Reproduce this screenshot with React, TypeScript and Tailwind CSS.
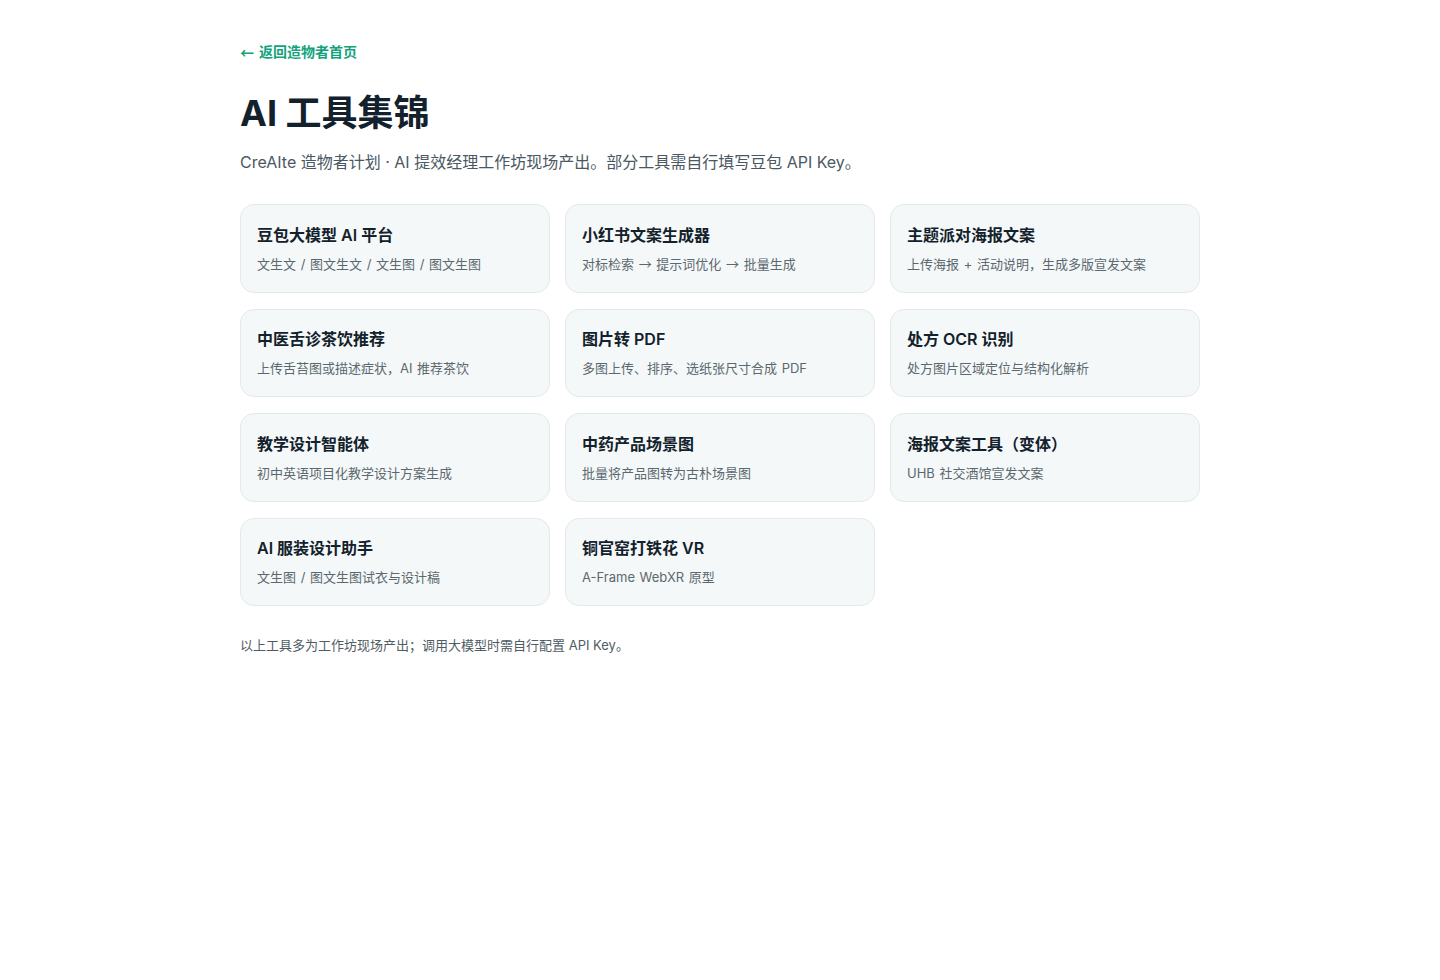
import type { ReactElement } from "react";

type Tool = {
  title: string;
  desc: string;
};

const tools: Tool[] = [
  { title: "豆包大模型 AI 平台", desc: "文生文 / 图文生文 / 文生图 / 图文生图" },
  { title: "小红书文案生成器", desc: "对标检索 → 提示词优化 → 批量生成" },
  { title: "主题派对海报文案", desc: "上传海报 + 活动说明，生成多版宣发文案" },
  { title: "中医舌诊茶饮推荐", desc: "上传舌苔图或描述症状，AI 推荐茶饮" },
  { title: "图片转 PDF", desc: "多图上传、排序、选纸张尺寸合成 PDF" },
  { title: "处方 OCR 识别", desc: "处方图片区域定位与结构化解析" },
  { title: "教学设计智能体", desc: "初中英语项目化教学设计方案生成" },
  { title: "中药产品场景图", desc: "批量将产品图转为古朴场景图" },
  { title: "海报文案工具（变体）", desc: "UHB 社交酒馆宣发文案" },
  { title: "AI 服装设计助手", desc: "文生图 / 图文生图试衣与设计稿" },
  { title: "铜官窑打铁花 VR", desc: "A-Frame WebXR 原型" },
];

const cjk = { fontFamily: '"Noto Sans CJK SC", sans-serif' };

// arrows taken from the CJK font are longer, like the reference
function Desc({ text }: { text: string }): ReactElement {
  const parts = text.split("→");
  return (
    <>
      {parts.map((part, i) => (
        <span key={i}>
          {i > 0 && <span style={cjk}>→</span>}
          {part}
        </span>
      ))}
    </>
  );
}

export default function App(): ReactElement {
  return (
    <div
      className="min-h-screen bg-white"
      style={{ fontFamily: '"Inter", "Noto Sans CJK SC", sans-serif' }}
    >
      <div className="mx-auto w-[960px] pt-[40px]">
        <a href="#" className="inline-flex items-center gap-[5px] text-sm font-semibold leading-5 text-[#12a37c]">
          <span style={cjk}>←</span>
          <span>返回造物者首页</span>
        </a>

        <h1 className="mt-[29px] text-[36px] font-bold leading-10 text-[#12212b]">
          AI 工具集锦
        </h1>
        <p className="mt-[17px] text-base leading-6 text-[#4a5862]">
          CreAIte 造物者计划 · AI 提效经理工作坊现场产出。部分工具需自行填写豆包 API Key。
        </p>

        <div className="mt-[30px] grid grid-cols-3 gap-x-[15px] gap-y-4">
          {tools.map((tool) => (
            <a
              key={tool.title}
              href="#"
              className="flex h-[88.5px] flex-col justify-center rounded-[14px] border border-[#e2eaea] bg-[#f5f8f8] px-4"
            >
              <h2 className="text-base font-semibold leading-6 text-[#12212b]">{tool.title}</h2>
              <p className="mt-[7px] text-[13px] leading-5 text-[#5b6870] [word-spacing:1px]">
                <Desc text={tool.desc} />
              </p>
            </a>
          ))}
        </div>

        <p className="mt-[29px] text-[13px] leading-5 text-[#4f5c64]">
          以上工具多为工作坊现场产出；调用大模型时需自行配置 API Key。
        </p>
      </div>
    </div>
  );
}
